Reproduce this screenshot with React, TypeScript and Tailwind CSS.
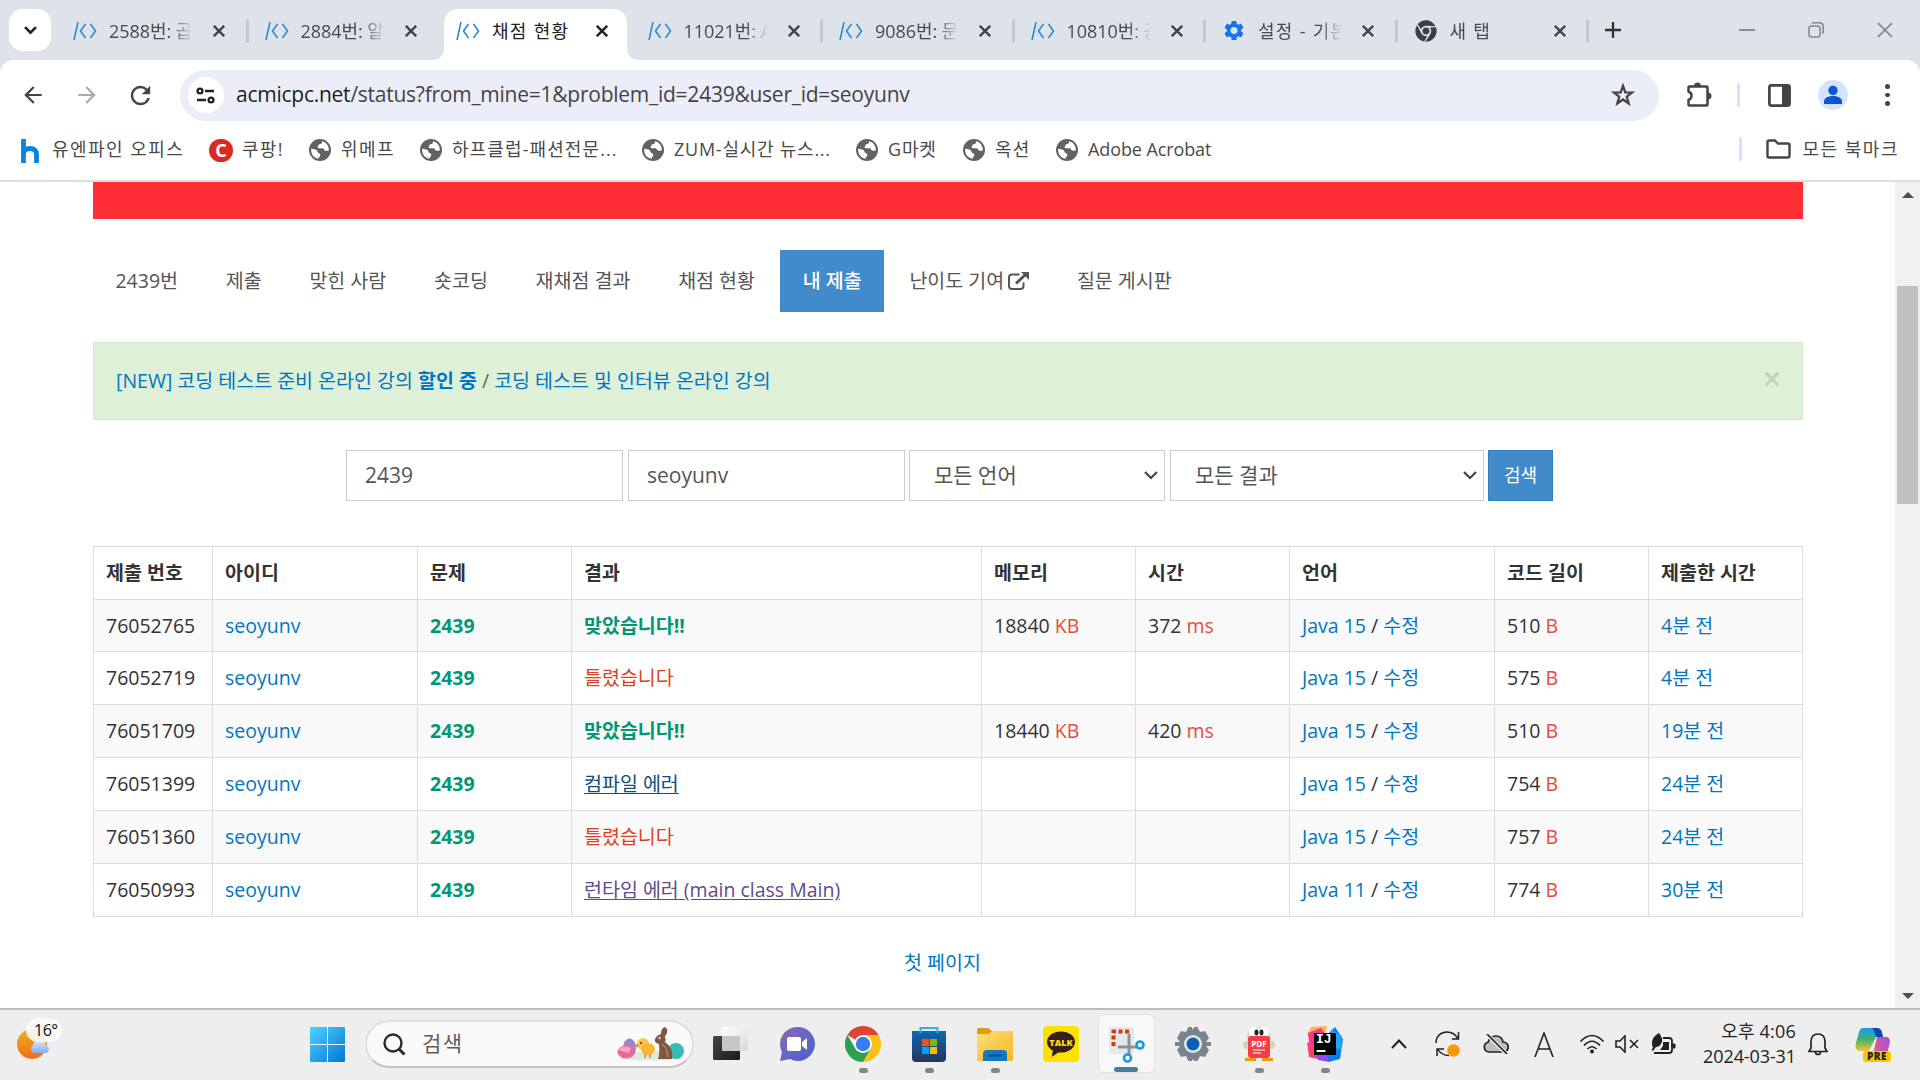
import React from "react";
import { MdArrowBack, MdArrowForward, MdRefresh, MdSettings } from "react-icons/md";
import { FaChrome } from "react-icons/fa";

const pageFont = "font-['Open_Sans','Noto_Sans_CJK_KR',sans-serif]";
const uiFont = "font-['Open_Sans','Noto_Sans_CJK_KR',sans-serif]";

function Slash() {
  return (
    <svg width="24" height="20" viewBox="0 0 24 20" fill="none" stroke="#2b8bd0" strokeWidth="1.6">
      <path d="M1 19 5 1M12.5 3 7.500 10l5 7M17.500 3l5 7-5 7" />
    </svg>
  );
}

function Cross({ size = 12, w = 2.4, color = "#444" }: { size?: number; w?: number; color?: string }) {
  return (
    <svg width={size} height={size} viewBox="0 0 12 12" stroke={color} strokeWidth={w}>
      <path d="M.8.8 11.2 11.2M11.2.8.8 11.2" />
    </svg>
  );
}

function Globe() {
  return (
    <svg width="22" height="22" viewBox="0 0 22 22" className="mr-[10px] mt-[2px]">
      <circle cx="11" cy="11" r="11" fill="#5f6368" />
      <path d="M2.300 9.500c1.500 1 3.500.3 5.200 1.500 1.300 1 .6 2.500 2 3 1.800.5 2.200 1.600 1.500 3-.7 1-1.500 1.300-1.500 2.800C4.500 19 1.500 14.500 2.300 9.500Z" fill="#fff" />
      <path d="M13 2.300c.3 2-.8 2.700-2.300 3-1.500.2-1.200 1.300-1.700 2.200-.7.8-.4 1.700.8 1.700h3.700c1.600 0 1.500 2.300 3 2.500 1.200.2 1.800 0 3.300-.2C20.200 7 17 3 13 2.300Z" fill="#fff" />
    </svg>
  );
}

const tabs = [
  { t: "2588번: 곱", k: "s", sep: true },
  { t: "2884번: 알", k: "s", sep: false },
  { t: "채점 현황", k: "s", active: true, sep: false },
  { t: "11021번: A", k: "s", sep: true },
  { t: "9086번: 문", k: "s", sep: true },
  { t: "10810번: 공", k: "s", sep: true },
  { t: "설정 - 기본", k: "g", sep: true },
  { t: "새 탭", k: "c", sep: true },
];

function Tab({ t, k, active, sep }: { t: string; k: string; active?: boolean; sep: boolean }) {
  const short = k !== "s" || active;
  return (
    <div className="relative flex h-[60px] w-[191.5px] shrink-0 items-center pt-[1px]">
      {active && (
        <svg className="absolute left-[-7px] top-[9px]" width="208" height="51" viewBox="0 0 208 51" fill="#fff">
          <path d="M0 51c9 0 12-5 12-13V16C12 6 17 0 27 0h153c10 0 15 6 15 16v22c0 8 4 13 13 13Z" />
        </svg>
      )}
      <div className="relative flex w-full items-center pl-[17px]">
        <div className="flex w-[24px] justify-center">
          {k === "s" && <Slash />}
          {k === "g" && <MdSettings size={25} color="#1a73e8" />}
          {k === "c" && <FaChrome size={22} color="#3c4043" />}
        </div>
        <div
          className={
            "w-[93px] whitespace-nowrap pt-[1px] text-[18px] leading-[26px] " +
            (short ? "ml-[12px] tracking-[1.300px] " : "ml-[12px] tracking-[-0.05px] ") +
            (active ? "text-[#222]" : "text-[#4a4a4a] [mask-image:linear-gradient(to_right,#000_62px,transparent_84px)]")
          }
        >
          {t}
        </div>
        <div className="ml-[11px]"><Cross color={active ? "#1f1f1f" : "#444"} /></div>
      </div>
      {sep && <div className="absolute right-[-1px] top-[19px] h-[24px] w-[3px] rounded bg-[#c6c8cb]" />}
    </div>
  );
}

const marks: { t: string; w: string; i: string; tr: string }[] = [
  { t: "유엔파인 오피스", w: "w-[188px]", i: "h", tr: "tracking-[1.45px]" },
  { t: "쿠팡!", w: "w-[100px]", i: "c", tr: "tracking-[1.3px]" },
  { t: "위메프", w: "w-[111px]", i: "g", tr: "tracking-[1.4px]" },
  { t: "하프클럽-패션전문...", w: "w-[222px]", i: "g", tr: "tracking-[1.1px]" },
  { t: "ZUM-실시간 뉴스...", w: "w-[214px]", i: "g", tr: "tracking-[0.75px]" },
  { t: "G마켓", w: "w-[107px]", i: "g", tr: "tracking-[0.8px]" },
  { t: "옥션", w: "w-[93px]", i: "g", tr: "tracking-[1.2px]" },
  { t: "Adobe Acrobat", w: "w-[170px]", i: "g", tr: "tracking-[-0.1px]" },
];

function Browser() {
  return (
    <div className={"h-[182px] bg-[#dee2e9] " + uiFont}>
      <div className="flex h-[60px]">
        <div className="ml-[9px] mt-[9px] flex h-[42px] w-[42px] items-center justify-center rounded-[14px] bg-white">
          <svg width="13" height="9" viewBox="0 0 13 9" fill="none" stroke="#1f1f1f" strokeWidth="2.6"><path d="M1 1.2 6.5 6.7 12 1.2" /></svg>
        </div>
        <div className="ml-[5px] flex">{tabs.map((t) => <Tab key={t.t} {...t} />)}</div>
        <div className="ml-[17px] flex items-center">
          <svg width="16" height="16" viewBox="0 0 16 16" stroke="#333" strokeWidth="2.3"><path d="M8 0v16M0 8h16" /></svg>
        </div>
        <div className="ml-auto mr-[27px] flex items-center gap-[53px]">
          <div className="h-[2px] w-[16px] bg-[#8a8d91]" />
          <svg width="16" height="16" viewBox="0 0 16 16" fill="none" stroke="#85888c" strokeWidth="1.6"><rect x="1" y="4" width="11" height="11" rx="2.5" /><path d="M4 1.5c.5-.5 1-.7 2-.7h5c3 0 4.200 1.500 4.200 4v5c0 1-.2 1.500-.7 2" /></svg>
          <Cross size={16} w={1.3} color="#85888c" />
        </div>
      </div>
      <div className="flex h-[70px] items-center rounded-t-[14px] bg-white">
        <div className="flex w-[180px] items-center pl-[20px] text-[#444]">
          <MdArrowBack size={26} />
          <MdArrowForward size={26} className="ml-[28px] text-[#a9a9a9]" />
          <MdRefresh size={29} className="ml-[26px]" />
        </div>
        <div className="flex h-[51px] w-[1479px] items-center rounded-full bg-[#ebeef8] pl-[8px] pr-[24px]">
          <div className="flex h-[36px] w-[36px] items-center justify-center rounded-full bg-white">
            <svg width="20" height="17" viewBox="0 0 20 17" fill="none" stroke="#222" strokeWidth="2.400"><circle cx="4" cy="4" r="2.400" /><path d="M9 4h9M1 13h9" /><circle cx="15" cy="13" r="2.400" /></svg>
          </div>
          <div className="ml-[12px] whitespace-nowrap text-[21px] tracking-[-0.25px] text-[#444]"><span className="text-[#1f1f1f]">acmicpc.net</span>/status?from_mine=1&amp;problem_id=2439&amp;user_id=seoyunv</div>
          <svg className="ml-auto" width="24" height="24" viewBox="0 0 24 24" fill="none" stroke="#444" strokeWidth="2.300"><path d="m12 2.800 2.300 6.500 6.900.2-5.400 4.200 1.900 6.700L12 16.500l-5.700 3.900 1.900-6.700-5.400-4.200 6.900-.2Z" /></svg>
        </div>
        <svg className="ml-[27px]" width="26" height="26" viewBox="0 0 26 26"><path d="M2.500 4.500h18q1 0 1 1v17q0 1-1 1h-17q-1 0-1-1V18c4-1.500 4-7 0-8.500V5.500q0-1 1-1Z" fill="none" stroke="#444" strokeWidth="2.500" /><path d="M8 4a3.500 3.500 0 0 1 7 0ZM22 10.500a3.500 3.500 0 0 1 0 7Z" fill="#444" /></svg>
        <div className="ml-[25px] h-[24px] w-[3px] rounded bg-[#d3e3fd]" />
        <svg className="ml-[28px]" width="23" height="23" viewBox="0 0 23 23"><rect x="1.400" y="1.400" width="20.200" height="20.200" rx="2" fill="none" stroke="#444" strokeWidth="2.700" /><path d="M14 1h8v21h-8z" fill="#444" /></svg>
        <svg className="ml-[27px]" width="30" height="30" viewBox="0 0 30 30"><circle cx="15" cy="15" r="15" fill="#d3e3fd" /><circle cx="15" cy="10.500" r="4.700" fill="#0b57d0" /><path d="M6 24v-2.500c0-4 5-5.500 9-5.500s9 1.500 9 5.500V24Z" fill="#0b57d0" /></svg>
        <div className="ml-[37px] flex flex-col gap-[4px]">
          <i className="h-[4.500px] w-[4.500px] rounded-full bg-[#444]" /><i className="h-[4.500px] w-[4.500px] rounded-full bg-[#444]" /><i className="h-[4.500px] w-[4.500px] rounded-full bg-[#444]" />
        </div>
      </div>
      <div className="flex h-[52px] items-center border-b-2 border-[#dedede] bg-white pl-[21px] pt-0 text-[18px] text-[#4a4a4a]">
        {marks.map((m) => (
          <div key={m.t} className={"mb-[12px] flex shrink-0 items-center whitespace-nowrap " + m.w}>
            {m.i === "h" && <svg width="18" height="24" viewBox="0 0 18 24" fill="none" stroke="#0a84e0" strokeWidth="4.800" className="mr-[13px] mt-[3px]"><path d="M2.500 0v24M2.500 15c0-4 2.500-5.500 6.500-5.500s6.500 1.500 6.500 6V24" /></svg>}
            {m.i === "c" && (
              <div className="mr-[9px] mt-[2px] flex h-[23px] w-[24px] items-center justify-center rounded-full border-2 border-dotted border-[#dc2a20] bg-[#dc2a20] text-[18px] font-bold leading-none text-white">C</div>
            )}
            {m.i === "g" && <Globe />}
            <span className={m.tr}>{m.t}</span>
          </div>
        ))}
        <div className="mb-[12px] ml-auto mr-[21px] flex items-center">
          <div className="h-[24px] w-[3px] rounded bg-[#d3e3fd]" />
          <svg className="ml-[24px] mr-[12px]" width="25" height="20" viewBox="0 0 25 20" fill="none" stroke="#444" strokeWidth="2.400"><path d="M1.500 3q0-1.500 1.500-1.500h6l3 3h10q1.500 0 1.500 1.500v11q0 1.500-1.500 1.500H3q-1.500 0-1.500-1.500Z" /></svg>
          <span className="tracking-[1.5px]">모든 북마크</span>
        </div>
      </div>
    </div>
  );
}

const nav = ["2439번", "제출", "맞힌 사람", "숏코딩", "재채점 결과", "채점 현황", "내 제출", "난이도 기여", "질문 게시판"];
const heads = ["제출 번호", "아이디", "문제", "결과", "메모리", "시간", "언어", "코드 길이", "제출한 시간"];
const rows = [
  ["76052765", "맞았습니다!!", "18840", "372", "Java 15", "510", "4분 전"],
  ["76052719", "틀렸습니다", "", "", "Java 15", "575", "4분 전"],
  ["76051709", "맞았습니다!!", "18440", "420", "Java 15", "510", "19분 전"],
  ["76051399", "컴파일 에러", "", "", "Java 15", "754", "24분 전"],
  ["76051360", "틀렸습니다", "", "", "Java 15", "757", "24분 전"],
  ["76050993", "런타임 에러 (main class Main)", "", "", "Java 11", "774", "30분 전"],
];

function resultClass(s: string) {
  if (s.startsWith("맞")) return "font-bold text-[#009874]";
  if (s.startsWith("틀")) return "text-[#dd4124]";
  if (s.startsWith("컴")) return "text-[#0f4c81] underline underline-offset-[2px]";
  return "text-[#5f4b8b] underline underline-offset-[2px]";
}

const cell = "border border-[#ddd] pl-[12px] pr-[8px] py-0 text-left whitespace-nowrap";

function Chevron() {
  return <svg className="mt-[2px]" width="14" height="9" viewBox="0 0 14 9" fill="none" stroke="#444" strokeWidth="2.200"><path d="m1 1 6 6 6-6" /></svg>;
}

function Page() {
  return (
    <div className={"flex h-[826px] bg-white " + pageFont}>
      <div className="flex-1 pl-[93px] pr-[92px] text-[19.5px] leading-[28px] text-[#333]">
        <div className="h-[37px] bg-[#ff2e36]" />
        <div className="mt-[31px] flex h-[62px] gap-[2.9px] text-[#555]">
          {nav.map((n) => (
            <div key={n} className={"flex items-center px-[22.450px] whitespace-nowrap " + (n === "내 제출" ? "bg-[#428bca] font-medium text-white" : "")}>
              {n}
              {n === "난이도 기여" && (
                <svg className="ml-[4px]" width="21" height="18" viewBox="0 0 21 18" fill="none" stroke="#555" strokeWidth="2"><path d="M11.500 2.500H4q-3 0-3 3V14q0 3 3 3h8.500q3 0 3-3v-3.500" /><path d="m8 11.500 9-8.500" strokeWidth="3" /><path d="M13 0h8v8Z" fill="#555" stroke="none" /></svg>
              )}
            </div>
          ))}
        </div>
        <div className="mt-[30px] flex h-[78px] items-center justify-between border border-[#d6e9c6] bg-[#dff0d8] px-[22px] text-[#3c763d]">
          <div><span className="text-[#0076c0]">[NEW] 코딩 테스트 준비 온라인 강의 <b>할인 중</b></span> / <span className="text-[#0076c0]">코딩 테스트 및 인터뷰 온라인 강의</span></div>
          <div className="mb-[4px] mr-[1px]"><Cross size={14} w={2.800} color="#bfd6ba" /></div>
        </div>
        <div className="mt-[30px] flex h-[51px] pl-[253px] text-[21px] text-[#555]">
          <div className="flex w-[277px] items-center border border-[#ccc] pb-[2px] pl-[18px]">2439</div>
          <div className="ml-[5px] flex w-[277px] items-center border border-[#ccc] pb-[2px] pl-[18px]">seoyunv</div>
          <div className="ml-[4px] flex w-[256px] items-center justify-between border border-[#ccc] pb-[2px] pl-[24px] pr-[6px]">모든 언어<Chevron /></div>
          <div className="ml-[5px] flex w-[314px] items-center justify-between border border-[#ccc] pb-[2px] pl-[24px] pr-[6px]">모든 결과<Chevron /></div>
          <div className="ml-[4px] flex w-[65px] items-center justify-center border border-[#357ebd] bg-[#428bca] pb-[2px] text-[18px] text-white">검색</div>
        </div>
        <table className="mt-[45px] w-[1710px] table-fixed border-collapse">
          <colgroup>
            <col className="w-[119px]" /><col className="w-[205px]" /><col className="w-[154px]" /><col className="w-[410px]" /><col className="w-[154px]" />
            <col className="w-[154px]" /><col className="w-[205px]" /><col className="w-[154px]" /><col className="w-[154px]" />
          </colgroup>
          <thead><tr className="h-[53px]">{heads.map((h) => <th key={h} className={cell + " font-bold"}>{h}</th>)}</tr></thead>
          <tbody>
            {rows.map((r, i) => (
              <tr key={r[0]} className={(i % 2 === 0 ? "bg-[#f9f9f9] " : "") + (i === 0 ? "h-[52px]" : "h-[53px]")}>
                <td className={cell}>{r[0]}</td>
                <td className={cell + " text-[#0076c0]"}>seoyunv</td>
                <td className={cell + " font-bold text-[#009874]"}>2439</td>
                <td className={cell}><span className={resultClass(r[1])}>{r[1]}</span></td>
                <td className={cell}>{r[2] && <>{r[2]} <span className="text-[#e74c3c]">KB</span></>}</td>
                <td className={cell}>{r[3] && <>{r[3]} <span className="text-[#e74c3c]">ms</span></>}</td>
                <td className={cell}><span className="text-[#0076c0]">{r[4]}</span> / <span className="text-[#0076c0]">수정</span></td>
                <td className={cell}>{r[5]} <span className="text-[#e74c3c]">B</span></td>
                <td className={cell + " text-[#0076c0]"}>{r[6]}</td>
              </tr>
            ))}
          </tbody>
        </table>
        <div className="mt-[32px] pl-[811px] text-[#0076c0]">첫 페이지</div>
      </div>
      <div className="flex w-[25px] flex-col items-center bg-[#f0f0f0]">
        <svg className="mt-[10px]" width="12" height="6" viewBox="0 0 12 6" fill="#505050"><path d="M0 6 6 0l6 6Z" /></svg>
        <div className="mt-[88px] h-[218px] w-[21px] bg-[#c1c1c1]" />
        <svg className="mb-[9px] mt-auto" width="12" height="6" viewBox="0 0 12 6" fill="#505050"><path d="m0 0 6 6 6-6Z" /></svg>
      </div>
    </div>
  );
}

const S = ({ children }: { children: React.ReactNode }) => <svg width="36" height="36" viewBox="0 0 36 36" fill="none">{children}</svg>;

const apps: { n: string; run?: boolean; el: React.ReactNode }[] = [
  { n: "views", el: <S><defs><linearGradient id="tv" x1="0" y1="0" x2="1" y2="1"><stop stopColor="#444" /><stop offset="1" stopColor="#1c1c1c" /></linearGradient><linearGradient id="tw" x1="0" y1="0" x2="1" y2="1"><stop stopColor="#fff" /><stop offset="1" stopColor="#d8d8d8" /></linearGradient></defs><rect y="10" width="27" height="24" rx="1.500" fill="url(#tv)" /><rect x="9" y="1" width="26" height="24" rx="1.500" fill="url(#tw)" /><path d="M9 10h18v15H9z" fill="#c6c6c6" /></S> },
  { n: "chat", el: <S><defs><linearGradient id="ch" x1="0" y1="0" x2="1" y2="1"><stop stopColor="#9a62ae" /><stop offset=".5" stopColor="#6468c4" /><stop offset="1" stopColor="#5058c8" /></linearGradient></defs><path d="M18 1a17 17 0 1 1-7 32l-10 2 2-9A17 17 0 0 1 18 1Z" fill="url(#ch)" /><rect x="8" y="11" width="14" height="14" rx="2" fill="#fff" /><path d="m23 16 5-4v12l-5-4Z" fill="#fff" /></S> },
  { n: "chrome", run: true, el: <S><path d="M18 18 2.400 9a18 18 0 0 1 31.200 0Z" fill="#db4437" /><path d="M33.600 9H18v9l8 4-8 14A18 18 0 0 0 33.600 9Z" fill="#fbc116" /><path d="m2.400 9 7.800 13.500L18 26l7.800-3.500L18 36A18 18 0 0 1 2.400 9Z" fill="#2da04e" /><circle cx="18" cy="18" r="9" fill="#fff" /><circle cx="18" cy="18" r="7.200" fill="#357ef0" /></S> },
  { n: "store", run: true, el: <S><defs><linearGradient id="st" x1="0" y1="0" x2="0" y2="1"><stop stopColor="#0e68b4" /><stop offset="1" stopColor="#25355c" /></linearGradient></defs><path d="M1 5h34v27q0 4-4 4H5q-4 0-4-4Z" fill="url(#st)" /><path d="M9.500 7V2h17v5" stroke="#25b3ee" strokeWidth="2" /><path d="M11 13h7v7h-7z" fill="#f25022" /><path d="M19 13h7v7h-7z" fill="#7fba00" /><path d="M11 21h7v7h-7z" fill="#00a4ef" /><path d="M19 21h7v7h-7z" fill="#ffb900" /></S> },
  { n: "files", run: true, el: <S><defs><linearGradient id="fo" x1="0" y1="0" x2="1" y2="1"><stop stopColor="#ffdc7a" /><stop offset="1" stopColor="#f8b91f" /></linearGradient></defs><path d="M0 4q0-2 2-2h9l4 3v6H0Z" fill="#dd9c12" /><path d="M0 8h12l3-3h21v29q0 1-1 1H0Z" fill="url(#fo)" /><path d="M6 35V28q0-4 4-4h16q4 0 4 4v7Z" fill="#1477c6" /><path d="M11 29.500h14" stroke="#0a4a87" strokeWidth="2" /></S> },
  { n: "talk", el: <div className="relative flex h-[36px] w-[36px] items-start justify-center rounded-[4px] bg-[#fae100]"><svg className="absolute left-0 top-0" width="36" height="36" viewBox="0 0 36 36"><ellipse cx="18" cy="16" rx="14" ry="10.500" fill="#371d1e" /><path d="m10 22-1 9 8-6Z" fill="#371d1e" /></svg><span className="relative mt-[10px] text-[9px] font-extrabold leading-[13px] text-[#fae100]">TALK</span></div> },
  { n: "snip", el: <svg width="37" height="38" viewBox="0 0 37 38" fill="none" className="mt-[2px]"><rect x="1" y="1" width="25" height="27" rx="3" fill="#e4e8ec" /><path d="M5.500 20V5.500H22" stroke="#d83b01" strokeWidth="4" strokeDasharray="4 2.500" /><path d="M21 8v20M10 21h20" stroke="#8a9299" strokeWidth="3" /><circle cx="32" cy="19" r="3.500" stroke="#1b9ae0" strokeWidth="2.600" /><circle cx="19.500" cy="32" r="3.500" stroke="#1b9ae0" strokeWidth="2.600" /></svg> },
  { n: "settings", el: <S><path d="M13.500 1h3.200l1.300 3 1.300-3h3.200L25 6l5-1 4 7-3 4h5v4h-5l3 4-4 7-5-1-2.500 5h-3.200L18 33l-1.300 2h-3.200L11 30l-5 1-4-7 3-4H0v-4h5l-3-4 4-7 5 1Z" fill="#79838c" /><circle cx="18" cy="18" r="9" fill="#e3e7ea" /><circle cx="18" cy="18" r="6.500" fill="#0b60b5" /></S> },
  { n: "pdf", run: true, el: <div className="relative flex h-[36px] w-[36px] justify-center"><svg className="absolute left-0 top-0" width="36" height="36" viewBox="0 0 36 36"><path d="M4 32h11v3H4zM21 32h11v3H21z" fill="#e89b0c" /><circle cx="6" cy="19" r="4" fill="#ddd1a8" /><circle cx="30" cy="19" r="4" fill="#ddd1a8" /><ellipse cx="18" cy="11" rx="12" ry="10" fill="#d6d2cc" /><circle cx="13.500" cy="6.500" r="5.500" fill="#fff" /><circle cx="22.500" cy="6.500" r="5.500" fill="#fff" /><ellipse cx="15.500" cy="6.500" rx="2" ry="3" fill="#222" /><ellipse cx="20.500" cy="6.500" rx="2" ry="3" fill="#222" /><rect x="7" y="10" width="22" height="22" rx="3" fill="#f13f48" /><path d="M12 24h12M12 27h8" stroke="#fff" /></svg><span className="relative mt-[12px] text-[8px] font-bold leading-[11px] text-white">PDF</span></div> },
  { n: "idea", run: true, el: <div className="relative h-[36px] w-[36px]"><svg className="absolute left-0 top-0" width="36" height="36" viewBox="0 0 36 36"><path d="M4 1 20 0 14 22 0 9Z" fill="#fdb44b" /><path d="m1 7 13-5 6 9-17 14Z" fill="#ff318c" /><path d="m20 9 8-8 8 12-3 20-12 3-8-6Z" fill="#087cfa" /><path d="m24 3 11 7-1 14-9-3Z" fill="#22a5f7" /><path d="m0 16 15 8 5 11L2 31Z" fill="#fc3f6c" /><path d="m8 26 11 2 4 8-12-2Z" fill="#8a4df0" /><rect x="7" y="7" width="22" height="22" fill="#000" /><path d="M9.500 25h9" stroke="#fff" strokeWidth="2" /></svg><span className="absolute left-[9px] top-[7px] font-['Liberation_Mono',monospace] text-[13px] font-bold leading-[14px] text-white">IJ</span></div> },
];

function Easter() {
  return (
    <svg width="68" height="34" viewBox="0 0 68 34">
      <path d="M4 28q30-8 60 0v4q-30 3-60 0Z" fill="#d9ecdc" />
      <ellipse cx="12.500" cy="21" rx="6.500" ry="9.500" fill="#a184c9" />
      <ellipse cx="9" cy="25" rx="8.500" ry="6.500" fill="#ef6796" /><path d="M1 23q6-6 13-2l-2 5Z" fill="#f9a5bd" />
      <ellipse cx="59" cy="24" rx="8" ry="8" fill="#35bdb6" />
      <circle cx="26" cy="17" r="6" fill="#fdc645" /><ellipse cx="31" cy="22" rx="7" ry="6" fill="#fcb434" /><path d="m21 17-4 1.500 4 2Z" fill="#ee7b20" /><path d="M28 27v4m5-4v4" stroke="#ee7b20" strokeWidth="1.500" /><circle cx="24" cy="16" r=".9" fill="#222" />
      <path d="M41 32q2-6 1-15-5-1-4-5 2-4 6-5 0-6 4-7l2 2q1 4-2 7 1 4 0 6 9 6 7 17Z" fill="#835642" /><path d="M45 17q5 3 6 13" stroke="#a87a62" strokeWidth="2" fill="none" /><circle cx="42.500" cy="11" r="1.200" fill="#ddd" />
    </svg>
  );
}

function Taskbar() {
  return (
    <div className={"flex h-[72px] border-t-2 border-[#bdbdbd] bg-[#eee] text-[#222] " + uiFont}>
      <div className="relative ml-[17px] mt-[8px] h-[44px] w-[46px]">
        <svg width="46" height="44" viewBox="0 0 46 44"><defs><linearGradient id="su" x1="0" y1="0" x2="0" y2="1"><stop stopColor="#eeb325" /><stop offset="1" stopColor="#f26a12" /></linearGradient><linearGradient id="cl" x1="0" y1="0" x2="0" y2="1"><stop stopColor="#dfe9fa" /><stop offset="1" stopColor="#86aee6" /></linearGradient></defs><circle cx="15" cy="26" r="15" fill="url(#su)" /><path d="M16 35a5 5 0 0 1 0-8q1-5 7-5 5 0 6 5a4.500 4.500 0 0 1 1 8Z" fill="url(#cl)" /><rect x="9" y="0" width="36" height="24" rx="12" fill="#f9f9f9" fillOpacity=".9" /></svg>
        <span className="absolute left-[17px] top-[1px] text-[16px] leading-[22px] tracking-[-0.5px] text-[#111]">16°</span>
      </div>
      <svg className="ml-[247px] mt-[17px]" width="35" height="35" viewBox="0 0 35 35"><defs><linearGradient id="wi" x1="0" y1="0" x2="1" y2="1"><stop stopColor="#4fd2ff" /><stop offset="1" stopColor="#0277d4" /></linearGradient></defs><path d="M1 0h16v17H0V1q0-1 1-1ZM18 0h16q1 0 1 1v16H18ZM0 18h17v17H1q-1 0-1-1ZM18 18h17v16q0 1-1 1H18Z" fill="url(#wi)" /></svg>
      <div className="ml-[20px] mt-[10px] flex h-[48px] w-[329px] items-center rounded-full border-2 border-b-[#c4c4c4] border-[#dfdfdf] bg-[#fafafa] pl-[16px] pr-[7px]">
        <svg width="23" height="23" viewBox="0 0 23 23" fill="none" stroke="#2a2a2a" strokeWidth="2.400"><circle cx="10" cy="10" r="8.500" /><path d="m16 16 5.500 5.500" strokeWidth="3" /></svg>
        <span className="ml-[16px] flex-1 text-[21px] text-[#5d5d5d] tracking-[1.4px]">검색</span>
        <Easter />
      </div>
      <div className="ml-[4px] flex">
        {apps.map((a) => (
          <div key={a.n} className="flex h-[70px] w-[66px] items-start justify-center pt-[4px]">
            <div className={"relative flex h-[59px] w-[57px] items-start justify-center " + (a.n === "snip" ? "-ml-[1px] rounded-[6px] border border-[#e2e2e2] bg-[#f8f8f8] pt-[9px]" : "pt-[12px]")}>
              {a.el}
              {a.run && <div className="absolute bottom-0 left-[24px] h-[5px] w-[9px] rounded-full bg-[#858585]" />}
              {a.n === "snip" && <div className="absolute bottom-0 left-[15px] h-[5px] w-[24px] rounded-full bg-[#4a7c9b]" />}
            </div>
          </div>
        ))}
      </div>
      <div className="ml-auto flex h-[68px] items-center">
        <svg width="16" height="10" viewBox="0 0 16 10" fill="none" stroke="#222" strokeWidth="2"><path d="m1 9 7-7.500L15 9" /></svg>
        <svg className="ml-[28px]" width="26" height="26" viewBox="0 0 26 26" fill="none" stroke="#222" strokeWidth="1.500"><path d="M1 12C1 5 6 1 12 1c6 0 9 3 11.500 7M23.500 1v7H17M14 24.500c-6 0-9-2-11.500-6.500M2 25v-7h7" /><circle cx="18.500" cy="19.500" r="6.200" fill="#ff9800" stroke="none" /></svg>
        <svg className="ml-[22px]" width="26" height="20" viewBox="0 0 26 20" fill="none" stroke="#222" strokeWidth="1.700"><path d="M6 18a5 5 0 0 1-1-9.800Q7 2 13 2t7 6a5 5 0 0 1 .5 10Z" fill="#bdbdbd" /><path d="m4 0 19 19.500" stroke="#eee" strokeWidth="4" /><path d="m4 0 20 20" /></svg>
        <svg className="ml-[25px]" width="20" height="25" viewBox="0 0 20 25" fill="none" stroke="#222" strokeWidth="1.600"><path d="M1 25 10 1l9 24M4.500 17h11" /></svg>
        <svg className="ml-[25px]" width="26" height="20" viewBox="0 0 26 20" fill="none" stroke="#222" strokeWidth="1.700"><path d="M1.500 7.500q11.500-12 23 0M5 11.500q8-8.500 16 0M8.500 15q4.500-4.500 9 0" /><circle cx="13" cy="17.500" r="2" fill="#222" stroke="none" /></svg>
        <svg className="ml-[10px]" width="24" height="18" viewBox="0 0 24 18" fill="none" stroke="#222" strokeWidth="1.600"><path d="M1 6h4l5-5v16l-5-5H1ZM15 5l8 8M23 5l-8 8" /></svg>
        <svg className="ml-[12px]" width="25" height="22" viewBox="0 0 25 22" fill="none"><path d="M12 5h6q3 0 3 3v9q0 3-3 3H3" stroke="#222" strokeWidth="1.800" /><path d="M9 17l3-4V9h6v8Z" fill="#222" /><path d="M22 11h2v4h-2z" fill="#222" stroke="#222" /><path d="M1 12Q0 4 8 0q4 5 3 9-2 5-6 5l-3 4-1.500-1L2 14.500Z" fill="#222" /></svg>
        <div className="ml-[25px] w-[95px] whitespace-nowrap text-right text-[18px] leading-[25px]"><div className="tracking-[0.2px]">오후 4:06</div><div className="tracking-[-0.1px]">2024-03-31</div></div>
        <svg className="ml-[12px]" width="20" height="23" viewBox="0 0 20 23" fill="none" stroke="#222" strokeWidth="1.700"><path d="M3 15V9q0-8 7-8t7 8v6l2 3.500H1ZM7.500 19q0 2.500 2.500 2.500t2.500-2.500" /></svg>
        <div className="relative ml-[27px] mr-[29px] mt-[2px] h-[35px] w-[36px]">
          <svg width="35" height="32" viewBox="0 0 35 32"><defs><linearGradient id="ca" x1="0" y1="0" x2="0" y2="1"><stop stopColor="#1b9bf0" /><stop offset=".5" stopColor="#43b36c" /><stop offset="1" stopColor="#f5c52c" /></linearGradient><linearGradient id="cb" x1="1" y1="0" x2="0" y2="1"><stop stopColor="#a34de8" /><stop offset="1" stopColor="#fb6a50" /></linearGradient></defs><path d="M8 0h14q4 0 5 5l1 4h-7l-7 14H6q-7 0-5-8l3-11Q5 0 8 0Z" fill="url(#ca)" /><path d="M16 0h6q4 0 5 5l1 4h-7l-2-6Q18 0 16 0Z" fill="#1544b5" /><path d="M22 9h9q4 0 4 5l-3 12q-1 5-5 5H13q4 0 5-5Z" fill="url(#cb)" /></svg>
          <div className="absolute left-[8px] top-[23px] flex h-[11px] w-[28px] items-center justify-center rounded-[3px] bg-[#ffc400] text-[10px] font-extrabold leading-none tracking-[0.5px] text-[#222]">PRE</div>
        </div>
      </div>
    </div>
  );
}

export default function App() {
  return (
    <div className="h-[1080px] w-[1920px] overflow-hidden bg-white">
      <Browser />
      <Page />
      <Taskbar />
    </div>
  );
}
